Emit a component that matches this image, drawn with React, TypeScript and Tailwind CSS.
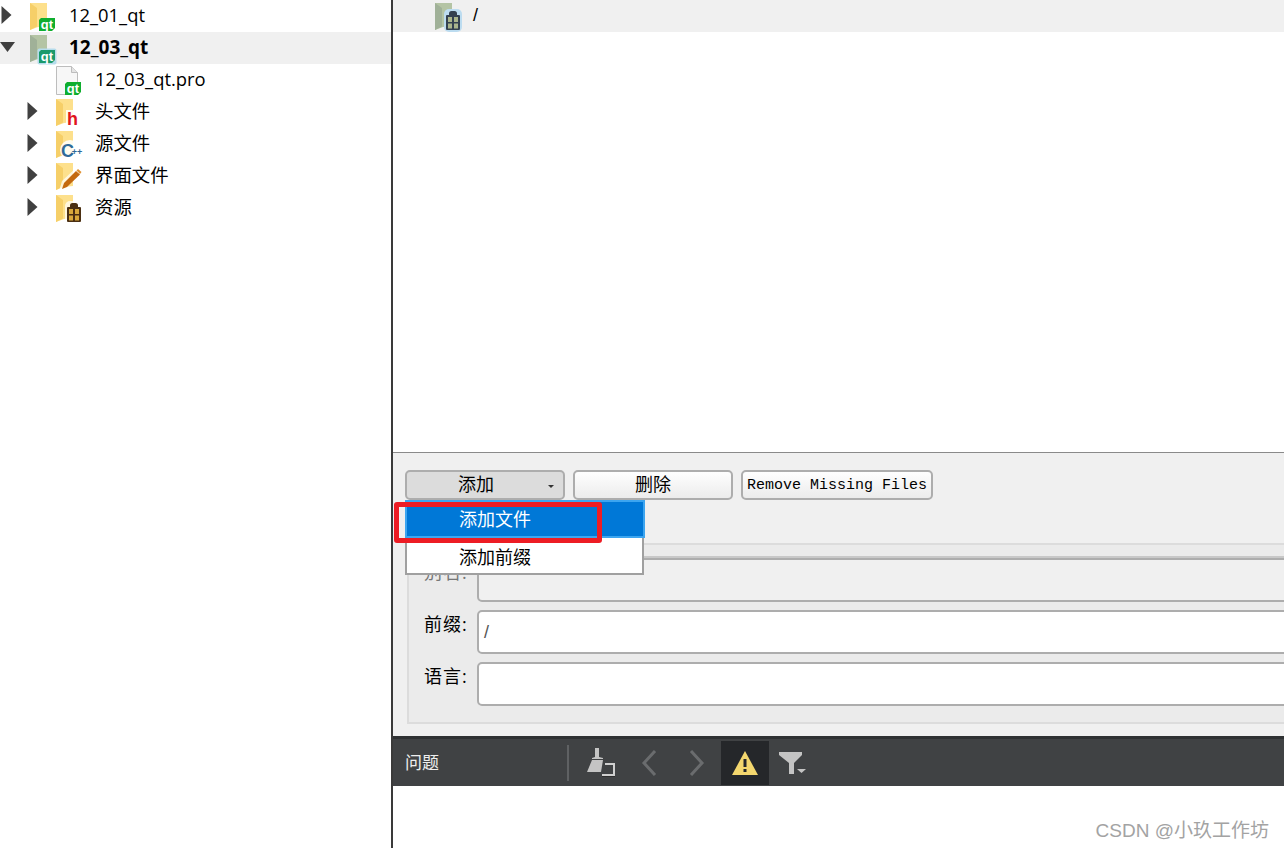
import React from "react";

const sans = "font-['Open_Sans','Noto_Sans_CJK_SC',sans-serif]";

function Arrow({ open }: { open?: boolean }) {
  return (
    <svg width="15" height="18" viewBox="0 0 15 18" className="shrink-0 -mt-0.5">
      {open ? <path d="M0 4h15L7.5 14z" fill="#3f3f3f" /> : <path d="M1.500 0l10 9-10 9z" fill="#404040" />}
    </svg>
  );
}

function Folder({ muted }: { muted?: boolean }) {
  return (
    <>
      <path d="M0 2h17v23l-9 1-8 3z" fill={muted ? "#b4c4a4" : "#fde08c"} />
      <path d="M0 2v27l7-3.500V7z" fill={muted ? "#a0b198" : "#f6cf68"} />
    </>
  );
}

function QtBadge({ x, y, halo }: { x: number; y: number; halo?: boolean }) {
  return (
    <>
      {halo && <rect x={x - 1.5} y={y - 1.5} width="19" height="16" rx="2" fill="#b5dcec" />}
      <path d={`M${x + 2} ${y}h14v10l-3 3H${x}V${y + 2}z`} fill={halo ? "#1b9a6c" : "#0fae2f"} />
      <text x={x + 8} y={y + 10.5} textAnchor="middle" fontSize="13" fontWeight="700" fill="#fff" fontFamily="'Liberation Sans',sans-serif">qt</text>
    </>
  );
}

function Gift({ x, y, dark }: { x: number; y: number; dark?: boolean }) {
  const c = dark ? "#344150" : "#4b2f12";
  const f = dark ? "#aab58c" : "#d9a83a";
  return (
    <g transform={`translate(${x} ${y})`}>
      <rect x="-2" y="-2" width="18" height="23" rx="5" fill={dark ? "#bcdcf0" : "#fff"} opacity={dark ? 1 : 0.7} />
      <path d="M3 4V2.500A2.500 2.500 0 0 1 5.500 0h3A2.500 2.500 0 0 1 11 2.500V4h2a1 1 0 0 1 1 1v13a1 1 0 0 1-1 1H1a1 1 0 0 1-1-1V5a1 1 0 0 1 1-1z" fill={c} />
      <rect x="2" y="6" width="4" height="5" fill={f} />
      <rect x="8" y="6" width="4" height="5" fill={f} />
      <rect x="2" y="12.500" width="4" height="5" fill={f} />
      <rect x="8" y="12.500" width="4" height="5" fill={f} />
    </g>
  );
}

type Kind = "qt" | "qtOpen" | "pro" | "h" | "cpp" | "form" | "res" | "resOpen";

function NodeIcon({ kind }: { kind: Kind }) {
  return (
    <svg width="26" height="30" viewBox="0 0 26 30" className="shrink-0 overflow-visible">
      {kind === "qt" && (<><Folder /><QtBadge x={9} y={17} /></>)}
      {kind === "qtOpen" && (<><Folder muted /><QtBadge x={9} y={17} halo /></>)}
      {kind === "pro" && (
        <>
          <path d="M.5 1.500h15l6 6V29.500H.5z" fill="#f7f7f7" stroke="#bdbdbd" />
          <path d="M15.500 1.500v6h6" fill="#e4e4e4" stroke="#bdbdbd" />
          <QtBadge x={9} y={17} />
        </>
      )}
      {kind === "h" && (
        <>
          <Folder />
          <rect x="10" y="13" width="13" height="16" fill="#fff" opacity=".85" />
          <text x="16.500" y="28" textAnchor="middle" fontSize="18" fontWeight="700" fill="#e0141c" fontFamily="'Liberation Sans',sans-serif">h</text>
        </>
      )}
      {kind === "cpp" && (
        <>
          <Folder />
          <circle cx="14" cy="21" r="10" fill="#fff" opacity=".85" />
          <text x="11.500" y="28" textAnchor="middle" fontSize="18" fontWeight="700" fill="#2f6a99" fontFamily="'Liberation Sans',sans-serif">C</text>
          <text x="21" y="25.500" textAnchor="middle" fontSize="9" fontWeight="700" fill="#2f6a99" fontFamily="'Liberation Sans',sans-serif">++</text>
        </>
      )}
      {kind === "form" && (
        <>
          <Folder />
          <path d="M3 30l3-10L21 6l5 5-15 15z" fill="#fff" opacity=".7" />
          <path d="M6 28l2-6L20 10l4 3.500L11 26z" fill="#c4690f" />
          <path d="M20.500 9.500l1.500-1.500 3.500 3-1.500 2z" fill="#e09030" />
        </>
      )}
      {kind === "res" && (<><Folder /><Gift x={11} y={10} /></>)}
      {kind === "resOpen" && (<><Folder muted /><Gift x={11} y={10} dark /></>)}
    </svg>
  );
}

function TreeRow({ label, kind, depth, arrow, open, bold, selected }: { label: string; kind: Kind; depth: number; arrow?: boolean; open?: boolean; bold?: boolean; selected?: boolean }) {
  return (
    <div className={`h-8 flex items-center ${selected ? "bg-[#f0f0f0]" : ""} ${depth === 0 ? "pl-0" : "pl-[26px]"}`}>
      <div className="w-[30px] shrink-0 flex">{arrow && <Arrow open={open} />}</div>
      <NodeIcon kind={kind} />
      <span className={`ml-[13px] -mt-0.5 text-black whitespace-nowrap ${bold ? "font-bold text-[19px]" : "text-[18.4px]"} ${sans}`}>{label}</span>
    </div>
  );
}

function PushButton({ children, pressed, mono, wide }: { children: React.ReactNode; pressed?: boolean; mono?: boolean; wide?: boolean }) {
  return (
    <div className={`relative h-[30px] ${wide ? "w-[192px]" : "w-40"} flex items-center justify-center whitespace-nowrap rounded-[5px] border-2 border-[#adadad] ${pressed ? "bg-[#dcdcdc] pr-[18px]" : "bg-linear-to-b from-[#fefefe] to-[#ececec]"} text-black ${mono ? "pt-0.5 text-[15px] font-['Liberation_Mono','Noto_Sans_CJK_SC',monospace]" : `pb-0.5 text-[18px] ${sans}`}`}>
      {children}
    </div>
  );
}

function FormRow({ label, value, disabled }: { label: string; value?: string; disabled?: boolean }) {
  return (
    <div className="flex items-start">
      <span className={`w-[68px] shrink-0 pl-[15px] pt-0.5 text-[18px] tracking-[1px] leading-6 whitespace-nowrap ${disabled ? "text-[#777]" : "text-black"} ${sans}`}>{label}</span>
      <div className={`flex-1 -mr-2 h-[44px] rounded-[5px] border-2 border-[#adadad] ${disabled ? "bg-[#f0f0f0]" : "bg-white"} pl-[5px] flex items-center text-[18px] text-[#555] font-['Liberation_Sans',sans-serif]`}>
        {value}
      </div>
    </div>
  );
}

export default function App() {
  return (
    <div className="relative w-[1284px] h-[848px] overflow-hidden flex bg-white">
      {/* project tree */}
      <aside className="w-[393px] shrink-0 border-r-2 border-[#3a3a3a]">
        <TreeRow label="12_01_qt" kind="qt" depth={0} arrow />
        <TreeRow label="12_03_qt" kind="qtOpen" depth={0} arrow open bold selected />
        <TreeRow label="12_03_qt.pro" kind="pro" depth={1} />
        <TreeRow label="头文件" kind="h" depth={1} arrow />
        <TreeRow label="源文件" kind="cpp" depth={1} arrow />
        <TreeRow label="界面文件" kind="form" depth={1} arrow />
        <TreeRow label="资源" kind="res" depth={1} arrow />
      </aside>

      <main className="flex-1 min-w-0 flex flex-col">
        {/* resource tree */}
        <div className="h-[453px] border-b border-[#8a8a8a] shrink-0">
          <div className="h-8 bg-[#f0f0f0] flex items-center pl-[42px]">
            <NodeIcon kind="resOpen" />
            <span className="ml-3 -mt-0.5 text-[18px] text-black font-['Liberation_Sans',sans-serif]">/</span>
          </div>
        </div>

        {/* editor form */}
        <div className="h-[283px] shrink-0 bg-[#f0f0f0] px-3 pt-[17px] relative">
          <div className="flex gap-2">
            <PushButton pressed>
              添加
              <span className="absolute right-[9px] top-[13px] w-0 h-0 border-x-[3px] border-x-transparent border-t-[3px] border-t-[#333]" />
            </PushButton>
            <PushButton>删除</PushButton>
            <PushButton mono wide>Remove Missing Files</PushButton>
          </div>
          <div className="mt-[43px] ml-[2px] -mr-3 h-[181px] overflow-hidden border-2 border-r-0 border-[#dcdcdc] bg-[#ebebeb] rounded-tl-[3px]">
            <div className="h-[13px] border-b-2 border-[#c8c8c8]" />
            <div className="flex flex-col gap-2">
              <FormRow label="别名:" disabled />
              <FormRow label="前缀:" value="/" />
              <FormRow label="语言:" />
            </div>
          </div>
        </div>

        {/* issues bar */}
        <div className="h-[50px] shrink-0 bg-[#404244] border-t-[3px] border-[#2f3133] flex items-center text-[#eee]">
          <span className={`w-[174px] pl-3 text-[17px] shrink-0 ${sans}`}>问题</span>
          <div className="w-0.5 h-9 bg-[#5f6163] shrink-0" />
          <div className="w-12 ml-2 h-11 flex items-center justify-center">
            <svg width="30" height="30" viewBox="0 0 30 30">
              <path d="M9 0h4v9l4 1v1H6v-1l3-1z" fill="#c4c4c4" />
              <path d="M6 12h11l-2 12H1z" fill="#c4c4c4" />
              <path d="M19 15h10v13H16v-2h11v-9h-8z" fill="#d0d0d0" />
              <path d="M16 28h13v1H16z" fill="#2e2e2e" />
            </svg>
          </div>
          <div className="w-12 h-11 flex items-center justify-center">
            <svg width="16" height="26" viewBox="0 0 16 26"><path d="M14 1L3 13l11 12" fill="none" stroke="#6a6c6e" strokeWidth="3" /></svg>
          </div>
          <div className="w-12 h-11 flex items-center justify-center">
            <svg width="16" height="26" viewBox="0 0 16 26"><path d="M2 1l11 12L2 25" fill="none" stroke="#6a6c6e" strokeWidth="3" /></svg>
          </div>
          <div className="w-12 h-11 bg-[#25272a] flex items-center justify-center">
            <svg width="26" height="24" viewBox="0 0 26 24">
              <path d="M13 0l13 24H0z" fill="#f4d76e" />
              <path d="M11.500 8h3v8h-3zM11.500 18h3v3h-3z" fill="#25272a" />
            </svg>
          </div>
          <div className="w-12 h-11 flex items-center justify-center">
            <svg width="28" height="24" viewBox="0 0 28 24">
              <path d="M0 1h23v3l-8 8v11h-5V12L0 4z" fill="#c4c4c4" />
              <path d="M18 18h9l-4.500 4z" fill="#c4c4c4" />
            </svg>
          </div>
        </div>
        <div className="flex-1" />
      </main>

      {/* popup menu */}
      <div className={`absolute left-[405px] top-[500px] w-[239px] h-[75px] bg-white border-2 border-t-0 border-[#a0a0a0] text-[18px] text-black ${sans}`}>
        <div className="-mx-0.5 -mr-[3px] h-[38px] bg-[#0078d7] border-2 border-[#3ca5f0] text-white pl-[52px] leading-[34px]">添加文件</div>
        <div className="pl-[52px] leading-[38px]">添加前缀</div>
      </div>
      <div className="absolute left-[394px] top-[502px] w-[208px] h-[41px] border-[5px] border-[#ed1c24] rounded-[3px]" />

      <span className="absolute right-[15px] top-[817px] text-[19px] text-[#a3a3a3] whitespace-nowrap font-['Liberation_Sans','Noto_Sans_CJK_SC',sans-serif]">CSDN @小玖工作坊</span>
    </div>
  );
}
